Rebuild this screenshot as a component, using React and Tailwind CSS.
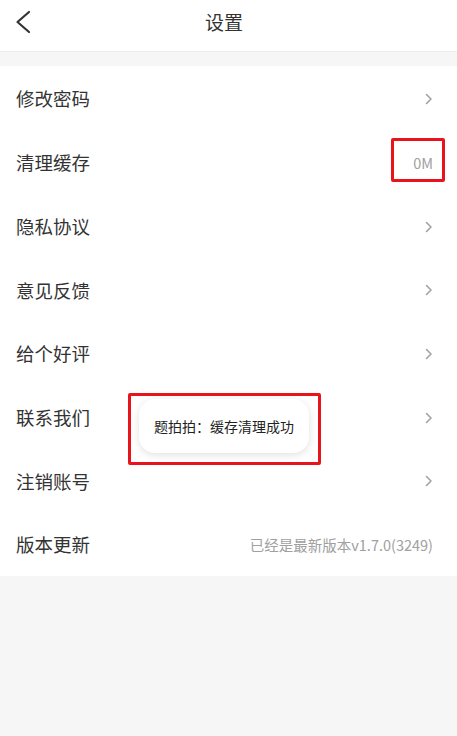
const rows = [
  { label: "修改密码" },
  { label: "清理缓存", value: "0M" },
  { label: "隐私协议" },
  { label: "意见反馈" },
  { label: "给个好评" },
  { label: "联系我们" },
  { label: "注销账号" },
  { label: "版本更新", value: "已经是最新版本v1.7.0(3249)" },
];

function Chevron() {
  return (
    <svg width="8" height="12" viewBox="0 0 8 12" fill="none" className="shrink-0">
      <path d="M1.5 1.5 L6 6 L1.5 10.5" stroke="#a3a3a3" strokeWidth="1.6" strokeLinecap="round" strokeLinejoin="round" />
    </svg>
  );
}

function BackArrow() {
  return (
    <svg width="16" height="24" viewBox="0 0 16 24" fill="none">
      <path d="M14 2 L2.5 12 L14 22" stroke="#333333" strokeWidth="2.2" strokeLinecap="round" strokeLinejoin="round" />
    </svg>
  );
}

function Row({ label, value }) {
  return (
    <div className="flex h-[63.7px] items-center justify-between pt-[3px] pl-4 pr-6">
      <span className="text-[18.5px] text-[#333333]">{label}</span>
      {value ? (
        <span className="text-[14.5px] text-[#a0a0a0]">{value}</span>
      ) : (
        <Chevron />
      )}
    </div>
  );
}

export default function App() {
  return (
    <div
      className="relative h-[736px] w-full overflow-hidden bg-[#f6f6f6]"
      style={{ fontFamily: '"Noto Sans CJK SC", "Noto Sans", sans-serif' }}
    >
      {/* Header */}
      <header className="relative flex h-[52px] items-center justify-center border-b border-[#ececec] bg-white pb-[6px] pr-[9px]">
        <button className="absolute left-[15px] top-[10px]">
          <BackArrow />
        </button>
        <h1 className="text-[19px] text-[#333333]">设置</h1>
      </header>

      <div className="mt-[14px] bg-white">
        {rows.map((r) => (
          <Row key={r.label} label={r.label} value={r.value} />
        ))}
      </div>

      {/* Toast */}
      <div className="absolute left-[139px] top-[399px] flex h-[54px] w-[170px] items-center justify-center rounded-[16px] bg-white shadow-[0_2px_8px_rgba(0,0,0,0.12)]">
        <span className="text-[14px] text-[#222222]">题拍拍：缓存清理成功</span>
      </div>

      {/* Annotation boxes */}
      <div className="absolute left-[391px] top-[138px] h-[44px] w-[54px] rounded-[2px] border-[3px] border-[#e8141c]" />
      <div className="absolute left-[128px] top-[393px] h-[72px] w-[193px] rounded-[2px] border-[3px] border-[#e8141c]" />
    </div>
  );
}
